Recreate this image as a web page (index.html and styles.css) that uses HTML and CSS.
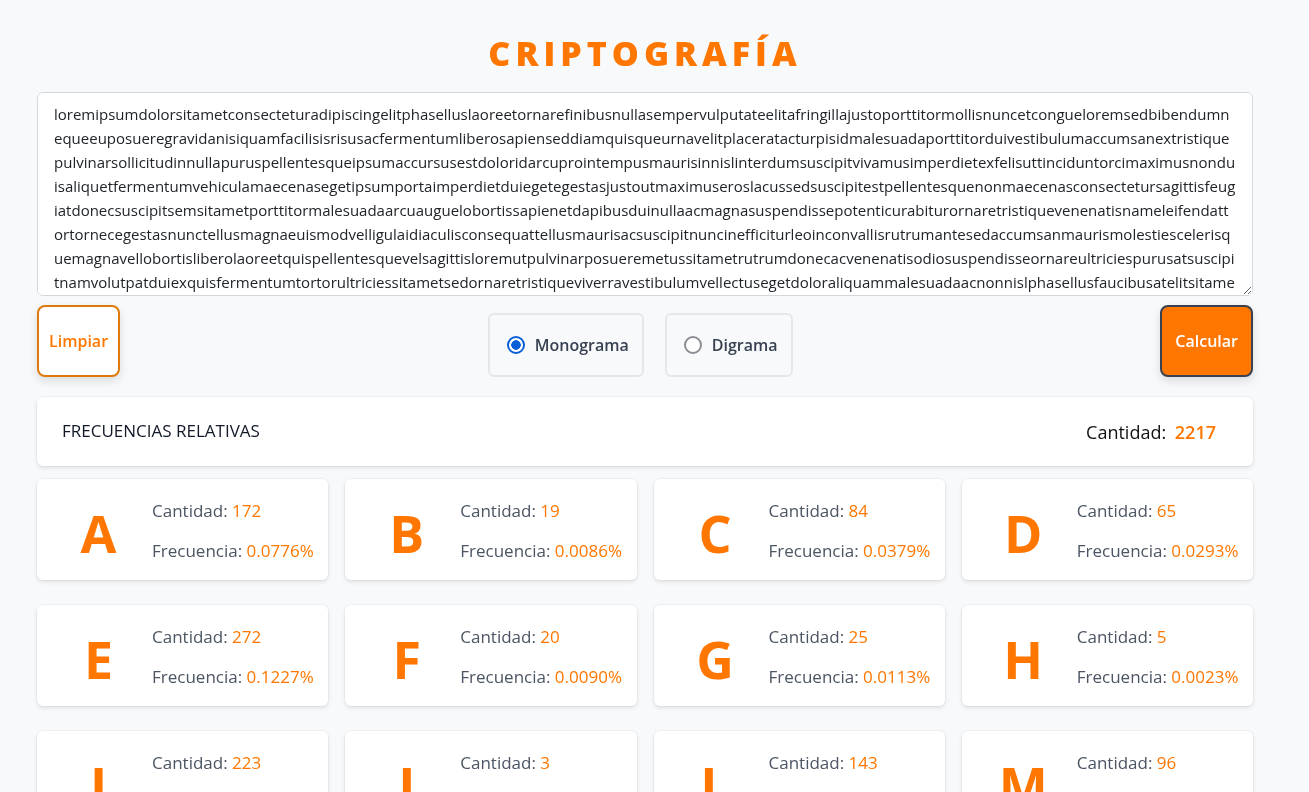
FILE: index.html
```html
<!DOCTYPE html>
<html lang="es">
<head>
<meta charset="utf-8">
<title>Criptografía</title>
<link rel="stylesheet" href="styles.css">
</head>
<body>
<main class="page">
  <h1 class="title">CRIPTOGRAFÍA</h1>
  <textarea class="input-text" spellcheck="false">loremipsumdolorsitametconsecteturadipiscingelitphaselluslaoreetornarefinibusnullasempervulputateelitafringillajustoporttitormollisnuncetcongueloremsedbibendumnequeeuposueregravidanisiquamfacilisisrisusacfermentumliberosapienseddiamquisqueurnavelitplaceratacturpisidmalesuadaporttitorduivestibulumaccumsanextristiquepulvinarsollicitudinnullapuruspellentesqueipsumaccursusestdoloridarcuprointempusmaurisinnislinterdumsuscipitvivamusimperdietexfelisuttinciduntorcimaximusnonduisaliquetfermentumvehiculamaecenasegetipsumportaimperdietduiegetegestasjustoutmaximuseroslacussedsuscipitestpellentesquenonmaecenasconsectetursagittisfeugiatdonecsuscipitsemsitametporttitormalesuadaarcuauguelobortissapienetdapibusduinullaacmagnasuspendissepotenticurabiturornaretristiquevenenatisnameleifendattortornecegestasnunctellusmagnaeuismodvelligulaidiaculisconsequattellusmaurisacsuscipitnuncinefficiturleoinconvallisrutrumantesedaccumsanmaurismolestiescelerisquemagnavellobortisliberolaoreetquispellentesquevelsagittisloremutpulvinarposueremetussitametrutrumdonecacvenenatisodiosuspendisseornareultriciespurusatsuscipitnamvolutpatduiexquisfermentumtortorultriciessitametsedornaretristiqueviverravestibulumvellectusegetdoloraliquammalesuadaacnonnislphasellusfaucibusatelitsitametpretiumnullafacilisivestibulumanteipsumprimisinfaucibusorciluctusetultricesposuerecubiliacuraeintegerporttitorlectusnecmassavariusvitaeconvallisdiamtempor</textarea>

  <div class="controls">
    <button class="btn btn-clear" type="button">Limpiar</button>
    <div class="modes">
      <label class="mode"><input type="radio" name="mode" checked><span>Monograma</span></label>
      <label class="mode"><input type="radio" name="mode"><span>Digrama</span></label>
    </div>
    <button class="btn btn-calc" type="button">Calcular</button>
  </div>

  <section class="summary">
    <h2 class="summary-title">FRECUENCIAS RELATIVAS</h2>
    <div class="summary-total">Cantidad: <strong>2217</strong></div>
  </section>

  <section class="grid">
    <article class="card"><div class="letter">A</div><div class="info"><p>Cantidad: <span>172</span></p><p>Frecuencia: <span>0.0776%</span></p></div></article>
    <article class="card"><div class="letter">B</div><div class="info"><p>Cantidad: <span>19</span></p><p>Frecuencia: <span>0.0086%</span></p></div></article>
    <article class="card"><div class="letter">C</div><div class="info"><p>Cantidad: <span>84</span></p><p>Frecuencia: <span>0.0379%</span></p></div></article>
    <article class="card"><div class="letter">D</div><div class="info"><p>Cantidad: <span>65</span></p><p>Frecuencia: <span>0.0293%</span></p></div></article>
    <article class="card"><div class="letter">E</div><div class="info"><p>Cantidad: <span>272</span></p><p>Frecuencia: <span>0.1227%</span></p></div></article>
    <article class="card"><div class="letter">F</div><div class="info"><p>Cantidad: <span>20</span></p><p>Frecuencia: <span>0.0090%</span></p></div></article>
    <article class="card"><div class="letter">G</div><div class="info"><p>Cantidad: <span>25</span></p><p>Frecuencia: <span>0.0113%</span></p></div></article>
    <article class="card"><div class="letter">H</div><div class="info"><p>Cantidad: <span>5</span></p><p>Frecuencia: <span>0.0023%</span></p></div></article>
    <article class="card"><div class="letter">I</div><div class="info"><p>Cantidad: <span>223</span></p><p>Frecuencia: <span>0.1006%</span></p></div></article>
    <article class="card"><div class="letter">J</div><div class="info"><p>Cantidad: <span>3</span></p><p>Frecuencia: <span>0.0014%</span></p></div></article>
    <article class="card"><div class="letter">L</div><div class="info"><p>Cantidad: <span>143</span></p><p>Frecuencia: <span>0.0645%</span></p></div></article>
    <article class="card"><div class="letter">M</div><div class="info"><p>Cantidad: <span>96</span></p><p>Frecuencia: <span>0.0433%</span></p></div></article>
    <article class="card"><div class="letter">N</div><div class="info"><p>Cantidad: <span>130</span></p><p>Frecuencia: <span>0.0586%</span></p></div></article>
    <article class="card"><div class="letter">O</div><div class="info"><p>Cantidad: <span>148</span></p><p>Frecuencia: <span>0.0668%</span></p></div></article>
    <article class="card"><div class="letter">P</div><div class="info"><p>Cantidad: <span>72</span></p><p>Frecuencia: <span>0.0325%</span></p></div></article>
    <article class="card"><div class="letter">Q</div><div class="info"><p>Cantidad: <span>30</span></p><p>Frecuencia: <span>0.0135%</span></p></div></article>
  </section>
</main>
</body>
</html>
```

FILE: styles.css
```css
* { box-sizing: border-box; }

html, body {
  margin: 0;
  background: #f8f9fb;
  font-family: "Open Sans", "Noto Sans", sans-serif;
  color: #1f2937;
}

.page {
  width: 1216px;
  margin-left: 37px;
  padding: 30px 0 40px;
}

.title {
  margin: 0;
  font-size: 34px;
  line-height: 46px;
  font-weight: 800;
  letter-spacing: 5px;
  text-align: center;
  color: #ff7700;
}

.input-text {
  display: block;
  width: 100%;
  height: 204px;
  margin-top: 16px;
  padding: 9px 16px;
  border: 1px solid #d4d7dc;
  border-radius: 6px;
  background: #fff;
  font-family: "Open Sans", "Noto Sans", sans-serif;
  font-size: 15px;
  line-height: 24px;
  color: #212529;
  outline: none;
  word-break: break-all;
}

.controls {
  margin-top: 9px;
  display: flex;
  justify-content: space-between;
  align-items: flex-end;
}

.btn {
  height: 72px;
  border-radius: 8px;
  font-family: "Open Sans", "Noto Sans", sans-serif;
  font-size: 16px;
  font-weight: 600;
  cursor: pointer;
  box-shadow: 0 4px 10px rgba(0, 0, 0, 0.12);
}

.btn-clear {
  padding: 0 10px;
  background: #fff;
  border: 2px solid #de7a0c;
  color: #ff7700;
}

.btn-calc {
  padding: 0 13px;
  background: #ff7700;
  border: 2px solid #374151;
  color: #fff;
}

.modes {
  display: flex;
  gap: 21px;
}

.mode {
  height: 64px;
  display: flex;
  align-items: center;
  gap: 10px;
  padding: 0 13px 0 17px;
  border: 2px solid #e5e7eb;
  border-radius: 6px;
  font-size: 16px;
  font-weight: 600;
  color: #374151;
}

.mode input {
  appearance: none;
  -webkit-appearance: none;
  margin: 0;
  width: 18px;
  height: 18px;
  border: 2px solid #8d8d97;
  border-radius: 50%;
  background: #fff;
}

.mode input:checked {
  border-color: #0b5fd6;
  background: radial-gradient(circle, #0b5fd6 0 4.5px, #fff 5px);
}

.summary {
  margin-top: 20px;
  height: 69px;
  padding: 0 37px 0 25px;
  display: flex;
  align-items: center;
  justify-content: space-between;
  background: #fff;
  border-radius: 6px;
  box-shadow: 0 0 0 1px rgba(0, 0, 0, 0.03), 0 2px 4px rgba(0, 0, 0, 0.1);
}

.summary-title {
  margin: 0 0 2px;
  font-size: 17px;
  font-weight: 400;
  color: #111827;
}

.summary-total {
  font-size: 18px;
  color: #111;
  word-spacing: 4px;
}

.summary-total strong {
  color: #ff7700;
  font-weight: 600;
}

.grid {
  margin-top: 13px;
  display: grid;
  grid-template-columns: repeat(4, 1fr);
  gap: 25px 17px;
}

.card {
  height: 101px;
  display: flex;
  background: #fff;
  border-radius: 6px;
  box-shadow: 0 0 0 1px rgba(0, 0, 0, 0.03), 0 2px 4px rgba(0, 0, 0, 0.1);
}

.letter {
  width: 115px;
  padding: 6px 0 0 8px;
  display: flex;
  align-items: center;
  justify-content: center;
  font-size: 52px;
  font-weight: 700;
  color: #ff7700;
}

.info {
  padding-top: 20px;
  display: flex;
  flex-direction: column;
  gap: 16px;
}

.info p {
  margin: 0;
  font-size: 17px;
  line-height: 24px;
  color: #4b5563;
}

.info span {
  color: #ff7700;
}
```
